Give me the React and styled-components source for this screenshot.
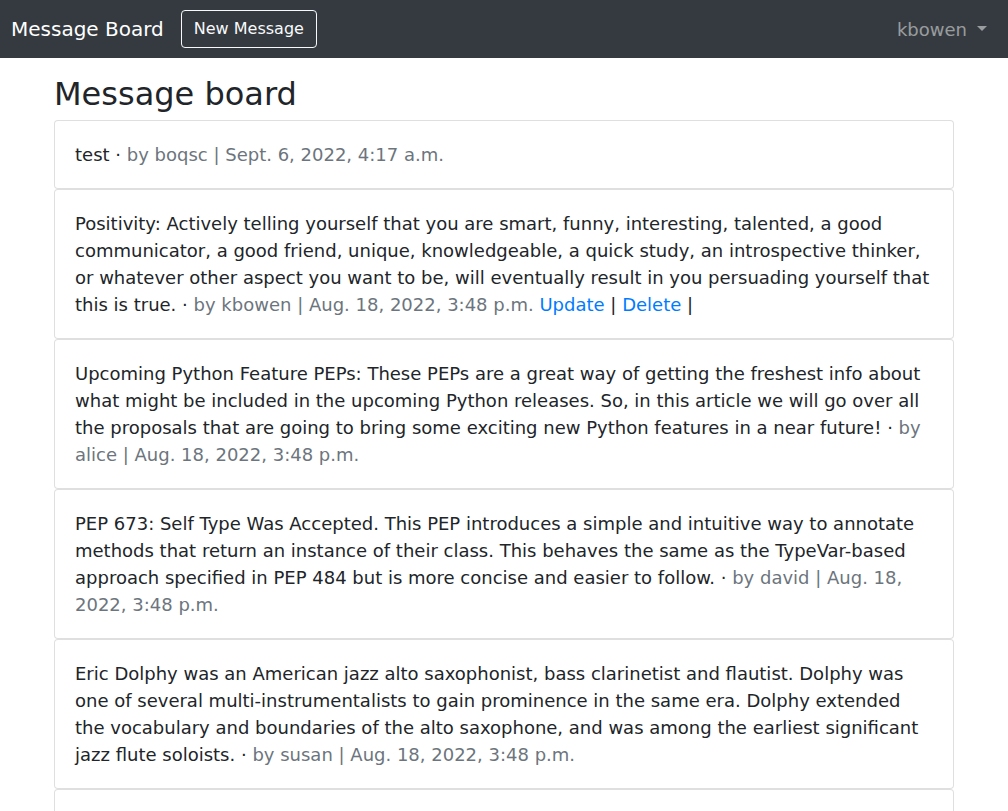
import React from "react";
import styled, { createGlobalStyle } from "styled-components";

const GlobalStyle = createGlobalStyle`
  html, body {
    margin: 0;
    padding: 0;
    background: #fff;
  }
  body {
    font-family: "DejaVu Sans", "Liberation Sans", sans-serif;
    font-size: 18px;
    line-height: 1.5;
    color: #212529;
  }
  * {
    box-sizing: border-box;
  }
`;

const Navbar = styled.nav`
  height: 58px;
  background: #343a40;
  display: flex;
  align-items: center;
  padding: 0 21px 0 11px;
`;

const Brand = styled.a`
  font-size: 20px;
  line-height: 30px;
  color: #fff;
  text-decoration: none;
  margin-right: 17px;
`;

const OutlineButton = styled.button`
  font-family: inherit;
  font-size: 16px;
  line-height: 24px;
  padding: 6px 12px;
  color: #f8f9fa;
  background: transparent;
  border: 1px solid #f8f9fa;
  border-radius: 4px;
  margin-top: -1px;
`;

const Spacer = styled.div`
  flex: 1;
`;

const UserMenu = styled.a`
  color: rgba(255, 255, 255, 0.5);
  font-size: 18px;
  line-height: 27px;
  display: flex;
  align-items: center;
  text-decoration: none;
  &::after {
    content: "";
    display: inline-block;
    margin-left: 10px;
    border-top: 5px solid;
    border-left: 5px solid transparent;
    border-right: 5px solid transparent;
    margin-top: -2px;
  }
`;

const Main = styled.main`
  width: 900px;
  margin: 0 auto;
  padding-top: 17px;
`;

const Title = styled.h1`
  font-size: 32px;
  font-weight: 400;
  line-height: 38px;
  margin: 0 0 7px;
`;

const Card = styled.div`
  border: 1px solid rgba(0, 0, 0, 0.125);
  border-radius: 4px;
  padding: 20px;
  background: #fff;
`;

const Meta = styled.span`
  color: #6c757d;
`;

const Action = styled.a`
  color: #007bff;
  text-decoration: none;
`;

const messages = [
  {
    text: "test",
    author: "boqsc",
    date: "Sept. 6, 2022, 4:17 a.m.",
  },
  {
    text:
      "Positivity: Actively telling yourself that you are smart, funny, interesting, talented, a good communicator, a good friend, unique, knowledgeable, a quick study, an introspective thinker, or whatever other aspect you want to be, will eventually result in you persuading yourself that this is true.",
    author: "kbowen",
    date: "Aug. 18, 2022, 3:48 p.m.",
    own: true,
  },
  {
    text:
      "Upcoming Python Feature PEPs: These PEPs are a great way of getting the freshest info about what might be included in the upcoming Python releases. So, in this article we will go over all the proposals that are going to bring some exciting new Python features in a near future!",
    author: "alice",
    date: "Aug. 18, 2022, 3:48 p.m.",
  },
  {
    text:
      "PEP 673: Self Type Was Accepted. This PEP introduces a simple and intuitive way to annotate methods that return an instance of their class. This behaves the same as the TypeVar-based approach specified in PEP 484 but is more concise and easier to follow.",
    author: "david",
    date: "Aug. 18, 2022, 3:48 p.m.",
  },
  {
    text:
      "Eric Dolphy was an American jazz alto saxophonist, bass clarinetist and flautist. Dolphy was one of several multi-instrumentalists to gain prominence in the same era. Dolphy extended the vocabulary and boundaries of the alto saxophone, and was among the earliest significant jazz flute soloists.",
    author: "susan",
    date: "Aug. 18, 2022, 3:48 p.m.",
  },
  {
    text:
      "Django is a high-level Python web framework that encourages rapid development and clean, pragmatic design.",
    author: "bob",
    date: "Aug. 18, 2022, 3:48 p.m.",
  },
];

export default function App() {
  return (
    <>
      <GlobalStyle />
      <Navbar>
        <Brand href="#">Message Board</Brand>
        <OutlineButton>New Message</OutlineButton>
        <Spacer />
        <UserMenu href="#">kbowen</UserMenu>
      </Navbar>
      <Main>
        <Title>Message board</Title>
        {messages.map((m, i) => (
          <Card key={i}>
            {m.text} ·{" "}
            <Meta>
              by {m.author} | {m.date}
            </Meta>
            {m.own && (
              <>
                {" "}
                <Action href="#">Update</Action> | <Action href="#">Delete</Action> |
              </>
            )}
          </Card>
        ))}
      </Main>
    </>
  );
}
